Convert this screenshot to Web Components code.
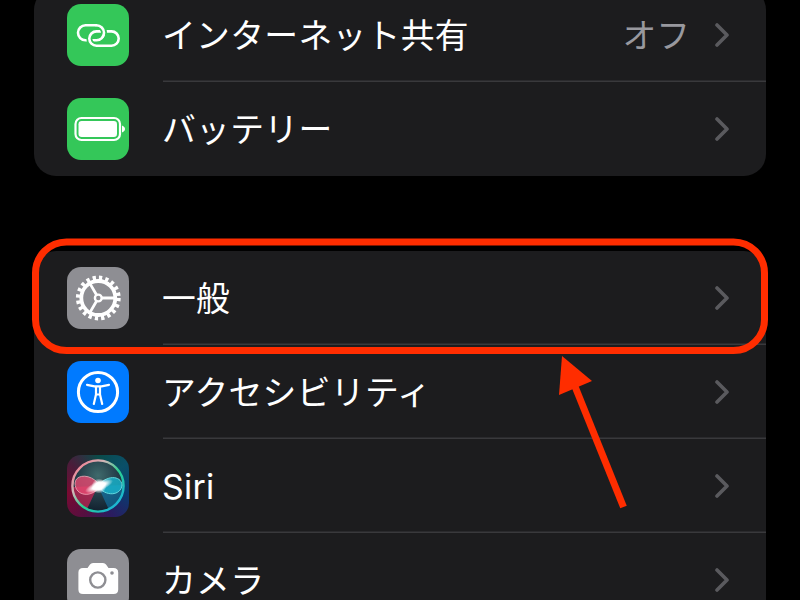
<!DOCTYPE html>
<html lang="ja">
<head>
<meta charset="utf-8">
<title>設定</title>
<style>
  html, body { margin: 0; height: 100%; background: #000; overflow: hidden; }
</style>
</head>
<body>
<settings-page>
  <settings-group>
    <settings-row label="インターネット共有" value="オフ"><app-icon name="link" bg="#34c759"></app-icon></settings-row>
    <settings-row label="バッテリー"><app-icon name="battery" bg="#34c759"></app-icon></settings-row>
  </settings-group>
  <settings-group>
    <settings-row label="一般"><app-icon name="gear" bg="#8e8e93"></app-icon></settings-row>
    <settings-row label="アクセシビリティ"><app-icon name="access" bg="#007aff"></app-icon></settings-row>
    <settings-row label="Siri"><app-icon name="siri" bg="conic-gradient(from 0deg, #0a4a48, #0a4f68, #083c70, #2a1c60, #560f40, #7a0a32, #4a1c3a, #0a4a48)"></app-icon></settings-row>
    <settings-row label="カメラ"><app-icon name="camera" bg="#8e8e93"></app-icon></settings-row>
  </settings-group>
  <callout-mark slot="overlay"></callout-mark>
</settings-page>

<script>
class SettingsPage extends HTMLElement {
  constructor() {
    super();
    this.attachShadow({mode: 'open'});
    this.shadowRoot.innerHTML = `
      <style>
        :host {
          display: block;
          position: relative;
          height: 600px;
          overflow: hidden;
          padding: 0 34px;
          box-sizing: border-box;
          font-family: "Inter", "Noto Sans CJK JP", sans-serif;
          color: #fff;
        }
        .list { display: flex; flex-direction: column; gap: 75px; margin-top: -12px; }
      </style>
      <div class="list"><slot></slot></div>
      <slot name="overlay"></slot>
    `;
  }
}

class SettingsGroup extends HTMLElement {
  constructor() {
    super();
    this.attachShadow({mode: 'open'});
    this.shadowRoot.innerHTML = `
      <style>
        :host {
          display: block;
          background: #1c1c1e;
          border-radius: 22px;
          overflow: hidden;
        }
      </style>
      <slot></slot>
    `;
  }
}

class SettingsRow extends HTMLElement {
  constructor() {
    super();
    this.attachShadow({mode: 'open'});
    const value = this.getAttribute('value');
    this.shadowRoot.innerHTML = `
      <style>
        :host { display: flex; align-items: center; height: 94px; padding-left: 33px; }
        .main {
          flex: 1;
          align-self: stretch;
          display: flex;
          align-items: center;
          margin-left: 34px;
          padding-right: 37px;
          box-shadow: inset 0 -1.5px 0 #39393c;
        }
        :host(:last-child) .main { box-shadow: none; }
        .label { flex: 1; font-size: 33.8px; line-height: 1; padding-top: 2px; letter-spacing: .3px; white-space: nowrap; margin-left: -1px; }
        .value { font-size: 33.8px; line-height: 1; padding-top: 2px; color: #98989e; margin-right: 25px; white-space: nowrap; }
        svg { display: block; }
      </style>
      <slot></slot>
      <div class="main">
        <span class="label">${this.getAttribute('label')}</span>
        ${value ? `<span class="value">${value}</span>` : ''}
        <svg width="14" height="24" viewBox="0 0 14 24">
          <path d="M2 2 L12 12 L2 22" fill="none" stroke="#5a5a5e" stroke-width="3.6" stroke-linecap="round" stroke-linejoin="round"/>
        </svg>
      </div>
    `;
  }
}

const ICONS = {
  link: `
    <g fill="none" stroke-width="2.6">
      <rect x="11" y="21.3" width="26" height="15" rx="7.5" stroke="#fff"/>
      <rect x="22.3" y="27.4" width="29.4" height="14.4" rx="7.2" stroke="#34c759" stroke-width="6"/>
      <rect x="22.3" y="27.4" width="29.4" height="14.4" rx="7.2" stroke="#fff"/>
      <path d="M29.5 21.3 A7.5 7.5 0 0 1 37 29" stroke="#34c759" stroke-width="6"/>
      <path d="M28.5 21.3 H29.5 A7.5 7.5 0 0 1 37 28.8 A7.5 7.5 0 0 1 35.5 33.2" stroke="#fff"/>
    </g>`,
  battery: `
    <rect x="8.5" y="20" width="44.5" height="22" rx="6" fill="none" stroke="#fff" stroke-width="2.2"/>
    <rect x="11.5" y="23" width="38.5" height="16" rx="3.2" fill="#fff"/>
    <path d="M55 27.5 C57 28.2 58 29.5 58 31 C58 32.5 57 33.8 55 34.5 Z" fill="#fff"/>`,
  gear: `
    <g fill="none" stroke="#fff">
      <circle cx="31.3" cy="31" r="20.3" stroke-width="4.2" stroke-dasharray="3.3 3.08"/>
      <circle cx="31.3" cy="31" r="17" stroke-width="3.8"/>
      <circle cx="31.3" cy="31" r="3.4" stroke-width="2.4"/>
      <path d="M34.7 31 H48 M29.6 28 L23 16.6 M29.6 34 L23 45.4" stroke-width="2.8"/>
    </g>`,
  access: `
    <circle cx="31" cy="31" r="19.6" fill="none" stroke="#fff" stroke-width="3"/>
    <circle cx="31" cy="19.5" r="2.8" fill="#fff"/>
    <path d="M20 23.8 L27.5 25.4 H34.5 L42 23.8 M29 25.4 V33.5 L26.8 43 M33 25.4 V33.5 L35.2 43 M29 33.5 H33" fill="none" stroke="#fff" stroke-width="2.2" stroke-linecap="round" stroke-linejoin="round"/>`,
  siri: `
    <defs>
      <radialGradient id="orb" cx=".5" cy=".3" r=".8">
        <stop offset="0" stop-color="#3f6a6c"/><stop offset=".5" stop-color="#223a46"/><stop offset="1" stop-color="#0b1624"/>
      </radialGradient>
      <linearGradient id="ring" x1="0" y1="0" x2="1" y2="1">
        <stop offset="0" stop-color="#ff6a86"/><stop offset=".32" stop-color="#d0b8b8"/><stop offset=".55" stop-color="#28d090"/><stop offset="1" stop-color="#18a8f0"/>
      </linearGradient>
      <radialGradient id="flare">
        <stop offset="0" stop-color="#fff"/><stop offset=".45" stop-color="#fff"/><stop offset="1" stop-color="#fff" stop-opacity="0"/>
      </radialGradient>
      <filter id="bl" x="-30%" y="-30%" width="160%" height="160%"><feGaussianBlur stdDeviation=".7"/></filter>
    </defs>
    <circle cx="31" cy="31" r="26.5" fill="url(#orb)"/>
    <path d="M5 32 A26 26 0 0 0 20 54 L31 31 Z" fill="#e02458" opacity=".65" filter="url(#bl)"/>
    <path d="M57 30 A26 26 0 0 1 42 55 L31 31 Z" fill="#0a88c8" opacity=".5" filter="url(#bl)"/>
    <circle cx="31" cy="31" r="25.6" fill="none" stroke="url(#ring)" stroke-width="2.4" filter="url(#bl)"/>
    <g filter="url(#bl)">
      <path d="M33 31 C26 19 9 18 8 28 C8 42 26 43 33 31 Z" fill="#e84870" opacity=".8" stroke="#ffb0c0" stroke-width="1"/>
      <path d="M31 31 C38 42 54 41 55 30 C54 20 39 20 31 31 Z" fill="#18b0c8" opacity=".85" stroke="#70f0f0" stroke-width="1"/>
    </g>
    <ellipse cx="32" cy="31" rx="15" ry="5" fill="url(#flare)" transform="rotate(-22 32 31)"/>
    <ellipse cx="32" cy="31" rx="7.5" ry="7.5" fill="url(#flare)"/>`,
  camera: `
    <path d="M16 19 H20.5 L23 15.5 Q24 14 26 14 H36 Q38 14 39 15.5 L41.5 19 H46.5 Q51.2 19 51.2 23.5 V40.5 Q51.2 45 46.5 45 H16 Q11.4 45 11.4 40.5 V23.5 Q11.4 19 16 19 Z" fill="#fff"/>
    <circle cx="30.8" cy="31" r="7.6" fill="none" stroke="#8e8e93" stroke-width="2.4"/>
    <circle cx="45" cy="24" r="1.8" fill="#8e8e93"/>`
};

class AppIcon extends HTMLElement {
  constructor() {
    super();
    this.attachShadow({mode: 'open'});
    this.shadowRoot.innerHTML = `
      <style>
        :host {
          display: block;
          flex: none;
          width: 62px;
          height: 62px;
          border-radius: 14px;
          overflow: hidden;
          background: ${this.getAttribute('bg')};
        }
        svg { display: block; }
      </style>
      <svg width="62" height="62" viewBox="0 0 62 62">${ICONS[this.getAttribute('name')]}</svg>
    `;
  }
}

// red ring and arrow drawn over the list
class CalloutMark extends HTMLElement {
  constructor() {
    super();
    this.attachShadow({mode: 'open'});
    this.shadowRoot.innerHTML = `
      <style>
        :host { position: absolute; left: 0; top: 0; width: 800px; height: 600px; pointer-events: none; }
        svg { display: block; }
      </style>
      <svg width="800" height="600" viewBox="0 0 800 600">
        <rect x="35.5" y="242" width="729" height="108.5" rx="31" fill="none" stroke="#ff2d00" stroke-width="7"/>
        <path d="M623.5 507 L574 384" fill="none" stroke="#ff2d00" stroke-width="7"/>
        <path d="M562 356 L559 395 L592 381 Z" fill="#ff2d00"/>
      </svg>
    `;
  }
}

customElements.define('settings-page', SettingsPage);
customElements.define('settings-group', SettingsGroup);
customElements.define('settings-row', SettingsRow);
customElements.define('app-icon', AppIcon);
customElements.define('callout-mark', CalloutMark);
</script>
</body>
</html>
